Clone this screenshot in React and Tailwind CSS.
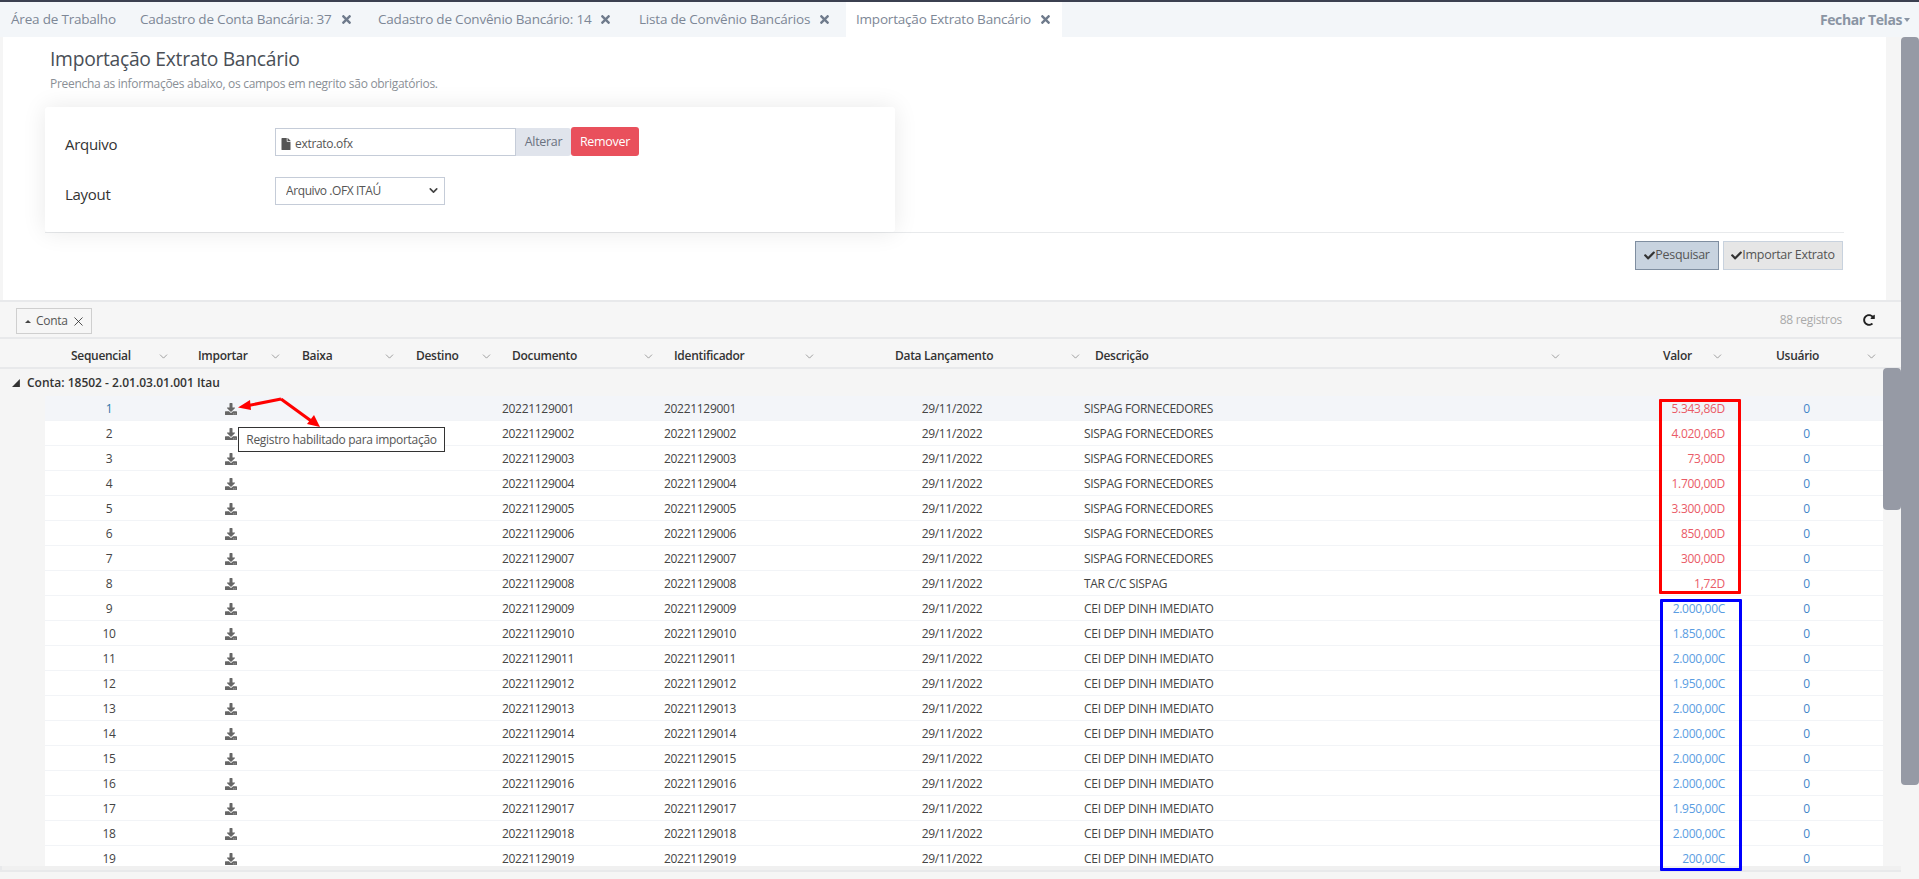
import { ChevronDown, X } from 'lucide-react';
import { FaCheck, FaDownload, FaFile, FaRedoAlt, FaTimes } from 'react-icons/fa';

const TABS = [
  { label: 'Área de Trabalho', width: 'w-[129px]' },
  { label: 'Cadastro de Conta Bancária: 37', width: 'w-[238px]', close: true },
  { label: 'Cadastro de Convênio Bancário: 14', width: 'w-[261px]', close: true },
  { label: 'Lista de Convênio Bancários', width: 'w-[217px]', close: true },
  { label: 'Importação Extrato Bancário', width: 'w-[216px]', close: true, active: true },
];

const GRID_COLS = 'grid grid-cols-[133px_112px_114px_96px_162px_161px_260px_487px_162px_151px]';

const COLUMNS = [
  { label: 'Sequencial', cls: 'pl-[26px] pr-[8px]' },
  { label: 'Importar', cls: 'pl-[20px] pr-[8px]' },
  { label: 'Baixa', cls: 'pl-[12px] pr-[8px]' },
  { label: 'Destino', cls: 'pl-[12px] pr-[7px]' },
  { label: 'Documento', cls: 'pl-[12px] pr-[7px]' },
  { label: 'Identificador', cls: 'pl-[12px] pr-[7px]' },
  { label: 'Data Lançamento', cls: 'pl-[72px] pr-[1px]' },
  { label: 'Descrição', cls: 'pl-[12px] pr-[8px]' },
  { label: 'Valor', cls: 'pl-[93px] pr-[8px]' },
  { label: 'Usuário', cls: 'pl-[44px] pr-[5px]' },
];

const DEBITS = ['5.343,86D', '4.020,06D', '73,00D', '1.700,00D', '3.300,00D', '850,00D', '300,00D', '1,72D'];
const CREDITS = ['2.000,00C', '1.850,00C', '2.000,00C', '1.950,00C', '2.000,00C', '2.000,00C', '2.000,00C', '2.000,00C', '1.950,00C', '2.000,00C', '200,00C'];

const ROWS = [...DEBITS, ...CREDITS].map((valor, i) => {
  const seq = i + 1;
  const doc = `20221129${String(seq).padStart(3, '0')}`;
  let descricao = 'CEI DEP DINH IMEDIATO';
  if (i < 7) descricao = 'SISPAG FORNECEDORES';
  if (i === 7) descricao = 'TAR C/C SISPAG';
  return { seq, doc, descricao, valor, debit: i < 8 };
});

function Tab({ tab }) {
  return (
    <div className={`flex h-full items-center pl-[10px] text-[#7d8796] ${tab.width} ${tab.active ? 'bg-white' : ''}`}>
      <span>{tab.label}</span>
      {tab.close && <FaTimes className="ml-[8px] text-[13px] text-[#6f7b8c]" />}
    </div>
  );
}

function Row({ row }) {
  const hover = row.seq === 1;
  return (
    <div className={`${GRID_COLS} h-[25px] items-center border-b border-[#f2f4f7] pt-px text-[12px] text-[#444] ${hover ? 'bg-[#f3f5f9]' : 'bg-white'}`}>
      <div className={`pr-[5px] text-center ${hover ? 'text-[#2f75a8]' : ''}`}>{row.seq}</div>
      <div className="pl-[47px] text-[#666]"><FaDownload className="text-[12px]" /></div>
      <div />
      <div />
      <div className="pl-[2px]">{row.doc}</div>
      <div className="pl-[2px]">{row.doc}</div>
      <div className="pr-[2px] text-center">29/11/2022</div>
      <div className="pl-[1px]">{row.descricao}</div>
      <div className={`pr-[7px] text-right ${row.debit ? 'text-[#ea5b67]' : 'text-[#5a9de2]'}`}>{row.valor}</div>
      <div className="pr-[2px] text-center text-[#3f86c9]">0</div>
    </div>
  );
}

export default function App() {
  return (
    <div className="relative h-[879px] w-full overflow-hidden bg-[#f5f5f5] font-['Open_Sans',sans-serif] text-[12px] tracking-[-0.3px] text-[#444]">
      <div className="h-[2px] bg-[#3b4050]" />

      {/* tabs */}
      <div className="flex h-[35px] items-center bg-[#f3f6f9] pl-px text-[13.5px] tracking-[-0.2px]">
        {TABS.map((tab) => <Tab key={tab.label} tab={tab} />)}
        <div className="ml-auto flex items-center pr-[9px] text-[14px] font-bold tracking-[-0.4px] text-[#8a94a3]">
          Fechar Telas
          <span className="ml-[2px] border-x-[3px] border-t-[4px] border-x-transparent border-t-[#8a94a3]" />
        </div>
      </div>

      {/* form */}
      <div className="ml-[3px] h-[263px] w-[1883px] bg-white pt-[10px]">
        <h1 className="pl-[47px] text-[19.3px] leading-[24px] text-[#4a4f57]">Importação Extrato Bancário</h1>
        <p className="mt-[6px] pl-[47px] text-[12px] leading-[14px] text-[#8a8f96]">Preencha as informações abaixo, os campos em negrito são obrigatórios.</p>

        <div className="ml-[42px] mt-[16px] w-[1799px] border-b border-[#e8eaec]">
          <div className="h-[125px] w-[850px] rounded-[3px] bg-white pl-[20px] pt-[20px] shadow-[0_0_24px_rgba(0,0,0,0.09)]">
            <div className="flex h-[29px] items-center">
              <label className="w-[210px] pt-[6px] text-[15px] font-medium text-[#333]">Arquivo</label>
              <div className="flex h-[28px] w-[241px] items-center border border-[#c5ccd8] pl-[4px] pt-[4px] text-[12px] text-[#555]">
                <FaFile className="mr-[3px] text-[12px] text-[#555]" />
                extrato.ofx
              </div>
              <div className="flex h-[28px] w-[55px] items-center justify-center rounded-r-[3px] bg-[#e0e4ec] pt-px text-[12.5px] text-[#6b7280]">Alterar</div>
              <div className="flex h-[29px] w-[68px] items-center justify-center rounded-[3px] bg-[#e9505c] pt-px text-[12.5px] text-white">Remover</div>
            </div>
            <div className="mt-[21px] flex h-[28px] items-center">
              <label className="w-[210px] pt-[6px] text-[15px] font-medium text-[#333]">Layout</label>
              <div className="relative h-[28px] w-[170px]">
                <select className="h-full w-full appearance-none border border-[#c5ccd8] bg-white pl-[10px] text-[12px] tracking-[-0.4px] text-[#555]">
                  <option>Arquivo .OFX ITAÚ</option>
                </select>
                <ChevronDown size={13} strokeWidth={3} className="absolute right-[5px] top-[7px] text-[#444]" />
              </div>
            </div>
          </div>
        </div>

        <div className="ml-[42px] mt-[8px] flex w-[1799px] justify-end gap-[4px] pr-px">
          <button className="flex h-[29px] w-[84px] items-center justify-center border border-[#7f8ea0] bg-[#c8d3df] text-[12.5px] text-[#555]">
            <FaCheck className="text-[11px] text-[#333]" />Pesquisar
          </button>
          <button className="flex h-[29px] w-[120px] items-center justify-center border border-[#c8d2de] bg-[#e6e6e6] text-[12.5px] text-[#555]">
            <FaCheck className="text-[11px] text-[#333]" />Importar Extrato
          </button>
        </div>
      </div>

      {/* grid */}
      <div className="h-[572px] w-[1901px] border-b-2 border-l-2 border-[#e8e9eb] bg-[#f0f0f0]">
        <div className="-ml-[2px]">
          <div className="flex h-[39px] items-center border-y-2 border-[#e8e9eb] bg-[#f6f6f6] pl-[16px] pr-[26px]">
            <div className="mt-[3px] flex h-[26px] w-[76px] items-center border border-[#cfcfcf] pl-[8px] text-[#555]">
              <span className="mr-[5px] border-x-[3px] border-b-[3px] border-x-transparent border-b-[#444]" />
              Conta
              <X size={15} strokeWidth={1.25} className="ml-[3px] text-[#222]" />
            </div>
            <span className="ml-auto text-[#aaa]">88 registros</span>
            <FaRedoAlt className="ml-[21px] text-[12px] text-[#222]" />
          </div>

          <div className="h-[30px] border-b-2 border-[#e8e9eb] bg-[#f6f6f6] pl-[45px] pt-[8px]">
            <div className={`${GRID_COLS} items-center font-semibold text-[#333]`}>
              {COLUMNS.map((col) => (
                <div key={col.label} className={`flex items-center justify-between ${col.cls}`}>
                  <span>{col.label}</span>
                  <ChevronDown size={13} strokeWidth={1.25} className="text-[#777]" />
                </div>
              ))}
            </div>
          </div>

          <div className="flex h-[27px] items-center bg-[#f5f5f5] pl-[12px] pt-px font-semibold tracking-normal text-[#333]">
            <svg width="9" height="9" viewBox="0 0 8 8" className="mr-[6px]"><polygon points="0,7 7,7 7,0" fill="#333" /></svg>
            Conta: 18502 - 2.01.03.01.001 Itau
          </div>

          <div className="h-[470px] overflow-hidden bg-[#f5f5f5] pl-[45px] pr-[18px]">
            {ROWS.map((row) => <Row key={row.seq} row={row} />)}
          </div>
        </div>
      </div>

      {/* scrollbars */}
      <div className="absolute left-[1901px] top-[37px] h-[748px] w-[18px] rounded-[4px] bg-[#969aa5]" />
      <div className="absolute left-[1883px] top-[368px] h-[142px] w-[18px] rounded-[4px] bg-[#969aa5]" />

      {/* tooltip + annotations */}
      <svg className="pointer-events-none absolute left-[230px] top-[390px]" width="100" height="45" viewBox="0 0 100 45">
        <polyline points="51,9 16,16" fill="none" stroke="#f00" strokeWidth="3" />
        <polyline points="51,9 84,33" fill="none" stroke="#f00" strokeWidth="3" />
        <polygon points="8,17.5 20,10 21,20" fill="#f00" />
        <polygon points="90,37 77,34 84,25" fill="#f00" />
      </svg>
      <div className="absolute left-[238px] top-[427px] flex h-[25px] w-[207px] items-center justify-center border border-[#333] bg-white text-[#555]">
        Registro habilitado para importação
      </div>
      <div className="pointer-events-none absolute left-[1659px] top-[399px] h-[195px] w-[82px] rounded-[1px] border-[3px] border-[#f00]" />
      <div className="pointer-events-none absolute left-[1660px] top-[599px] h-[272px] w-[82px] rounded-[1px] border-[3px] border-[#00f]" />
    </div>
  );
}
